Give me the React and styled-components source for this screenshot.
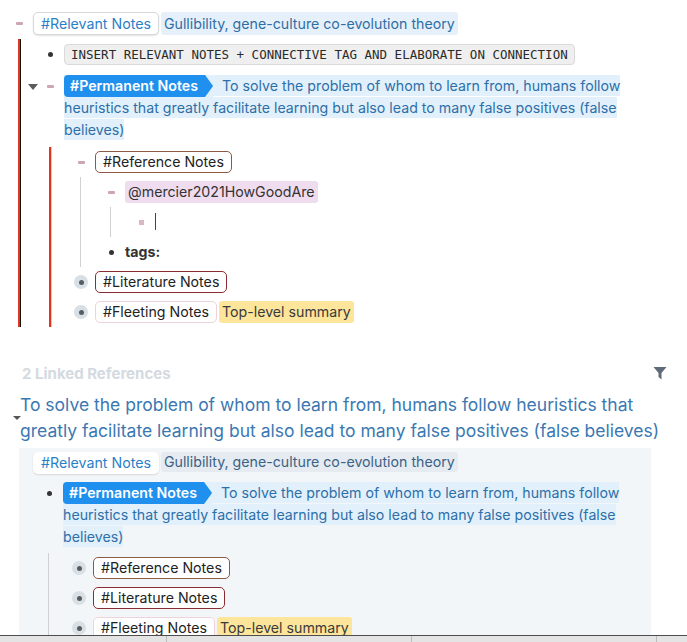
import React from 'react'
import styled, { createGlobalStyle, css } from 'styled-components'

const GlobalStyle = createGlobalStyle`
  html, body {
    margin: 0;
    padding: 0;
    background: #fff;
  }
  body {
    font-family: Inter, "Noto Sans", sans-serif;
    color: #333;
  }
`

const Page = styled.div`
  width: 687px;
  height: 642px;
  display: flex;
  flex-direction: column;
  overflow: hidden;
`

const Main = styled.div`
  flex: 1;
  min-height: 0;
  overflow: hidden;
  padding: 8px 20px 0 5px;
`

const Tree = styled.div`
  margin-right: 16px;
`

const Row = styled.div`
  display: flex;
  align-items: flex-start;
  padding: 4px 0;
`

const Control = styled.div`
  position: relative;
  flex: 0 0 28px;
  height: 22px;
  display: flex;
  align-items: center;
  justify-content: center;
`

const Caret = styled.span`
  position: absolute;
  left: -8px;
  top: 9px;
  width: 0;
  height: 0;
  border-left: 5px solid transparent;
  border-right: 5px solid transparent;
  border-top: 6px solid #5a5a5a;
`

const bulletKinds = {
  dash: css`
    width: 7px;
    height: 3px;
    border-radius: 1px;
    background: #cda6af;
  `,
  dot: css`
    width: 5px;
    height: 5px;
    border-radius: 50%;
    background: #333;
  `,
  square: css`
    width: 5px;
    height: 5px;
    background: #dbb7c2;
  `,
  ring: css`
    width: 14px;
    height: 14px;
    border-radius: 50%;
    background: #d8e0e6;
    display: flex;
    align-items: center;
    justify-content: center;
    &::after {
      content: '';
      width: 5px;
      height: 5px;
      border-radius: 50%;
      background: #555c62;
    }
  `
}

const Bullet = styled.span`
  display: block;
  ${p => bulletKinds[p.$kind]}
`

const Content = styled.div`
  flex: 1;
  min-width: 0;
  font-size: 14.2px;
  line-height: ${p => p.$lh || 22}px;
  color: #333;
`

const childLines = {
  root: css`
    border-left: 2px solid #e3341f;
    box-shadow: inset 1px 0 0 #111;
  `,
  main: css`
    border-left: 2px solid #e3341f;
    box-shadow: inset 1px 0 0 #cfcfcf;
  `,
  gray: css`
    border-left: 1px solid #d0d0d0;
  `
}

const Children = styled.div`
  margin-left: 13px;
  padding-left: 16px;
  margin-top: ${p => p.$gap || 0}px;
  ${p => childLines[p.$line]}
  ${p => p.$line === 'none' && css`
    margin-left: 0;
    padding-left: 2px;
  `}
`

const Pill = styled.span`
  display: inline-block;
  vertical-align: top;
  padding: 0 7px;
  background: #fff;
  border-radius: 5px;
  border: 1px solid ${p => p.$border || 'transparent'};
  color: ${p => p.$color || '#222'};
  line-height: ${p => p.$lh || 20}px;
  box-shadow: ${p => p.$shadow ? '0 1px 2px rgba(0, 0, 0, 0.12)' : 'none'};
`

const Mark = styled.span`
  display: inline-block;
  vertical-align: top;
  margin-left: ${p => p.$flush ? 0 : 2}px;
  padding: 0 3px;
  border-radius: 3px;
  background: ${p => p.$bg};
  color: ${p => p.$color || '#333'};
  line-height: ${p => p.$lh || 22}px;
`

const PermShell = styled.span`
  display: inline-block;
  vertical-align: top;
  background: #e2f0fc;
`

const PermTag = styled.span`
  display: inline-block;
  padding: 0 15px 0 6px;
  background: #2090ee;
  color: #fff;
  font-weight: 600;
  line-height: 22px;
  border-radius: 4px 0 0 4px;
  clip-path: polygon(0 0, calc(100% - 8px) 0, 100% 50%, calc(100% - 8px) 100%, 0 100%);
`

const PermText = styled.span`
  padding: 2px 0 2px 9px;
  background: #e2f0fc;
  color: #2d6fa8;
`

const Code = styled.span`
  display: inline-block;
  vertical-align: top;
  margin: 1px 0 2px;
  height: 21px;
  box-sizing: border-box;
  padding: 0 6px;
  border: 1px solid #dadada;
  border-radius: 4px;
  background: #efefef;
  font-family: "DejaVu Sans Mono", "Liberation Mono", monospace;
  font-size: 12.5px;
  line-height: 19px;
  color: #2a2a2a;
`

const Cursor = styled.span`
  display: inline-block;
  vertical-align: top;
  width: 1px;
  height: 17px;
  margin-top: 2px;
  background: #444;
`

const Bold = styled.span`
  font-weight: 700;
  color: #333;
`

const LinkedHeader = styled.div`
  display: flex;
  align-items: center;
  justify-content: space-between;
  margin-top: 36px;
  padding-left: 17px;
  height: 20px;
  font-size: 15px;
  font-weight: 700;
  color: #d4dae0;
`

const RefTitle = styled.div`
  display: flex;
  align-items: center;
  margin-top: 9px;
  font-size: 17.5px;
  line-height: 26px;
  color: #3b78b2;
`

const SmallCaret = styled.span`
  flex: 0 0 auto;
  margin: 0 -1px 0 8px;
  width: 0;
  height: 0;
  border-left: 4px solid transparent;
  border-right: 4px solid transparent;
  border-top: 4px solid #555;
`

const RefBox = styled.div`
  margin: 4px 16px 0 14px;
  padding-left: 14px;
  background: #f3f6f9;
`

const Footer = styled.div`
  flex: 0 0 6px;
  display: grid;
  grid-template-columns: 167px 245px 245px 1fr;
  border-top: 1px solid #4d4d4d;
  background: #e4e4e4;
`

const FooterCell = styled.div`
  border-right: 1px solid #bcbcbc;
  &:last-child {
    border-right: none;
  }
`

const FilterIcon = () => (
  <svg width="14" height="14" viewBox="0 0 14 14">
    <path d="M0.5 1h13L8.5 7v6.5L5.5 11V7z" fill="#5f6b78" />
  </svg>
)

const PermanentLine = () => (
  <>
    <PermShell>
      <PermTag>#Permanent Notes</PermTag>
    </PermShell>
    <PermText>
      To solve the problem of whom to learn from, humans follow heuristics that greatly facilitate learning but also lead to many false positives (false believes)
    </PermText>
  </>
)

const NoteRow = ({ bullet, caret, lh, children }) => (
  <Row>
    <Control>
      {caret && <Caret />}
      <Bullet $kind={bullet} />
    </Control>
    <Content $lh={lh}>{children}</Content>
  </Row>
)

export default function App() {
  return (
    <Page>
      <GlobalStyle />
      <Main>
        <Tree>
          <NoteRow bullet="dash" lh={23}>
            <Pill $border="#d6d9dc" $color="#2a7fc8" $lh={21} $shadow>#Relevant Notes</Pill>
            <Mark $bg="#e6f0fa" $color="#2f6ea5" $lh={23}>Gullibility, gene-culture co-evolution theory</Mark>
          </NoteRow>
          <Children $line="root">
            <NoteRow bullet="dot">
              <Code>INSERT RELEVANT NOTES + CONNECTIVE TAG AND ELABORATE ON CONNECTION</Code>
            </NoteRow>
            <NoteRow bullet="dash" caret>
              <PermanentLine />
            </NoteRow>
            <Children $line="main" $gap={2}>
              <NoteRow bullet="dash">
                <Pill $border="#8c5a44">#Reference Notes</Pill>
              </NoteRow>
              <Children $line="gray">
                <NoteRow bullet="dash">
                  <Mark $bg="#efdcef" $flush>@mercier2021HowGoodAre</Mark>
                </NoteRow>
                <Children $line="gray">
                  <NoteRow bullet="square">
                    <Cursor />
                  </NoteRow>
                </Children>
                <NoteRow bullet="dot">
                  <Bold>tags:</Bold>
                </NoteRow>
              </Children>
              <NoteRow bullet="ring">
                <Pill $border="#8a2d33">#Literature Notes</Pill>
              </NoteRow>
              <NoteRow bullet="ring">
                <Pill $border="#efd3db">#Fleeting Notes</Pill>
                <Mark $bg="#fde59c" $color="#3a3a3a">Top-level summary</Mark>
              </NoteRow>
            </Children>
          </Children>
        </Tree>

        <LinkedHeader>
          <span>2 Linked References</span>
          <FilterIcon />
        </LinkedHeader>

        <RefTitle>
          <SmallCaret />
          <span>To solve the problem of whom to learn from, humans follow heuristics that greatly facilitate learning but also lead to many false positives (false believes)</span>
        </RefTitle>

        <RefBox>
          <Row>
            <Content $lh={20}>
              <Pill $color="#2a7fc8" $shadow>#Relevant Notes</Pill>
              <Mark $bg="#e5ebf0" $color="#3b6286" $lh={20}>Gullibility, gene-culture co-evolution theory</Mark>
            </Content>
          </Row>
          <Children $line="none">
            <NoteRow bullet="dot">
              <PermanentLine />
            </NoteRow>
            <Children $line="gray" $gap={1}>
              <NoteRow bullet="ring">
                <Pill $border="#8c5a44">#Reference Notes</Pill>
              </NoteRow>
              <NoteRow bullet="ring">
                <Pill $border="#8a2d33">#Literature Notes</Pill>
              </NoteRow>
              <NoteRow bullet="ring">
                <Pill $border="#efd3db">#Fleeting Notes</Pill>
                <Mark $bg="#fde59c" $color="#3a3a3a">Top-level summary</Mark>
              </NoteRow>
            </Children>
          </Children>
        </RefBox>
      </Main>
      <Footer>
        <FooterCell />
        <FooterCell />
        <FooterCell />
        <FooterCell />
      </Footer>
    </Page>
  )
}
